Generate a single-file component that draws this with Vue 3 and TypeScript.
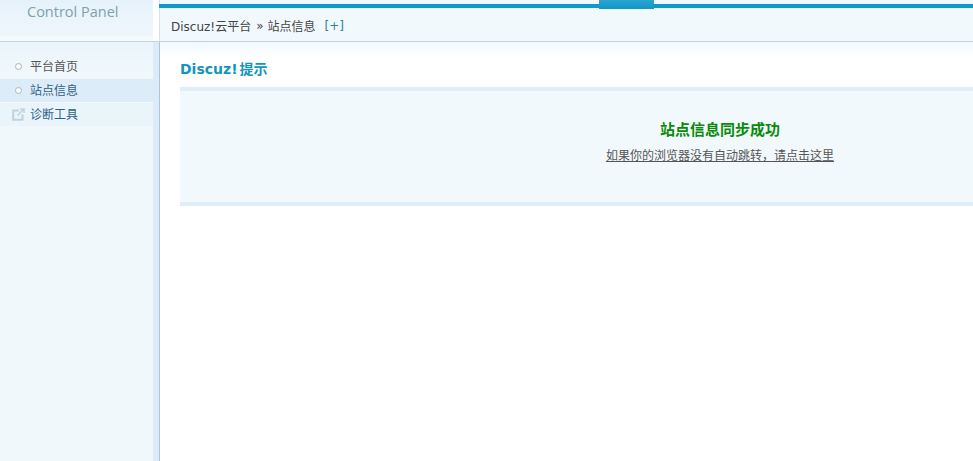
<script setup lang="ts">
const menu = [
  { label: "平台首页", kind: "dot", state: "" },
  { label: "站点信息", kind: "dot", state: "active" },
  { label: "诊断工具", kind: "ext", state: "tool" },
];
</script>

<template>
  <div class="page">
    <aside class="side">
      <div class="logo">
        <span class="logo-text">Control Panel</span>
      </div>
      <div class="side-body">
        <ul class="menu">
          <li v-for="item in menu" :key="item.label" :class="['menu-item', item.state]">
            <span class="menu-icon">
              <span v-if="item.kind === 'dot'" class="dot"></span>
              <svg v-else width="13" height="13" viewBox="0 0 13 13">
                <path d="M7 2.5H1.2v9.3h9.3V6.5" fill="none" stroke="#c0d2dc" stroke-width="2" />
                <path d="M5.5 7.5L11 2M8 1h4v4" fill="none" stroke="#c0d2dc" stroke-width="1.6" />
              </svg>
            </span>
            <span class="menu-label">{{ item.label }}</span>
          </li>
        </ul>
      </div>
    </aside>

    <main class="main">
      <div class="top">
        <div class="top-bar"><span class="top-tab"></span></div>
        <div class="crumb">
          <span>Discuz!云平台</span>
          <span class="sep">»</span>
          <span>站点信息</span>
          <a class="plus">[+]</a>
        </div>
      </div>
      <div class="content">
        <h3 class="title">Discuz! 提示</h3>
        <div class="notice">
          <h4 class="notice-title">站点信息同步成功</h4>
          <a class="notice-link">如果你的浏览器没有自动跳转，请点击这里</a>
        </div>
      </div>
    </main>
  </div>
</template>

<style>
html,
body {
  margin: 0;
  overflow: hidden;
  background: #fff;
}
</style>

<style scoped>
.page {
  display: flex;
  width: 973px;
  height: 461px;
  overflow: hidden;
  font-family: "DejaVu Sans", "Noto Sans CJK SC", sans-serif;
  font-size: 12px;
  color: #444;
}

.side {
  width: 160px;
  flex: none;
  display: flex;
  flex-direction: column;
}

.logo {
  height: 42px;
  flex: none;
  box-sizing: border-box;
  padding: 3px 0 0 27px;
  border-bottom: 1px solid #c2d3dc;
  border-right: 1px solid #d3e3ec;
  background: linear-gradient(to right, transparent 153px, #fff 153px),
    linear-gradient(to bottom, #e6f2fa, #eef6fc 36px, #f8fbfe 37px);
}

.logo-text {
  font-family: "Open Sans", sans-serif;
  font-size: 14.5px;
  line-height: 18px;
  color: #80a0ac;
}

.side-body {
  flex: 1;
  padding-top: 13px;
  border-right: 1px solid #a8c8da;
  background: linear-gradient(to right, transparent 153px, #dcebf7 153px),
    linear-gradient(to bottom, #e9f4fb, #f0f8fc 30px);
}

.menu {
  list-style: none;
  margin: 0;
  padding: 0;
  width: 153px;
}

.menu-item {
  display: flex;
  align-items: center;
  height: 23px;
  margin-bottom: 1px;
  color: #555;
}

.menu-item.active {
  background: #dcedf9;
  color: #2f6186;
}

.menu-item.tool {
  background: #e9f4fb;
  color: #2f6186;
}

.menu-icon {
  width: 30px;
  flex: none;
  display: flex;
  justify-content: center;
  padding-left: 7px;
  box-sizing: border-box;
}

.menu-item.tool .menu-icon {
  padding-left: 6px;
}

.menu-label {
  font-family: "Noto Sans CJK SC", sans-serif;
  margin-bottom: 2px;
}

.dot {
  width: 5px;
  height: 5px;
  border: 1px solid #a6b4ba;
  border-radius: 50%;
  background: #fff;
}

.main {
  flex: 1;
  min-width: 0;
  display: flex;
  flex-direction: column;
}

.top {
  height: 42px;
  flex: none;
  box-sizing: border-box;
  padding-top: 4px;
  border-bottom: 1px solid #c2d3dc;
  background: #f2f9fd;
}

.top-bar {
  position: relative;
  height: 4px;
  margin-left: -1px;
  background: #0f9bc9;
}

.top-tab {
  position: absolute;
  left: 440px;
  top: -4px;
  width: 55px;
  height: 9px;
  background: linear-gradient(to bottom, #2ba5d0, #0f95c4);
}

.crumb {
  display: flex;
  align-items: center;
  height: 33px;
  box-sizing: border-box;
  padding: 2px 0 0 11px;
}

.sep {
  margin: 0 4px 0 5px;
}

.plus {
  margin-left: 9px;
  color: #2f7f9f;
}

.content {
  flex: 1;
  padding-left: 20px;
  background: linear-gradient(to bottom, #f2f9fd, #fff 16px);
}

.title {
  margin: 0;
  padding-top: 19px;
  font-size: 14px;
  line-height: 16px;
  font-weight: bold;
  color: #1594bd;
  word-spacing: -3px;
}

.notice {
  width: 1080px;
  height: 119px;
  margin-top: 10px;
  box-sizing: border-box;
  padding-top: 31px;
  border-top: 4px solid #deeffb;
  border-bottom: 4px solid #deeffb;
  background: #f2f9fd;
  display: flex;
  flex-direction: column;
  align-items: center;
  gap: 10px;
}

.notice-title {
  margin: 0;
  font-size: 15px;
  line-height: 16px;
  font-weight: bold;
  color: #0a8a0a;
}

.notice-link {
  font-size: 12px;
  line-height: 16px;
  color: #555;
  text-decoration: underline;
}
</style>
